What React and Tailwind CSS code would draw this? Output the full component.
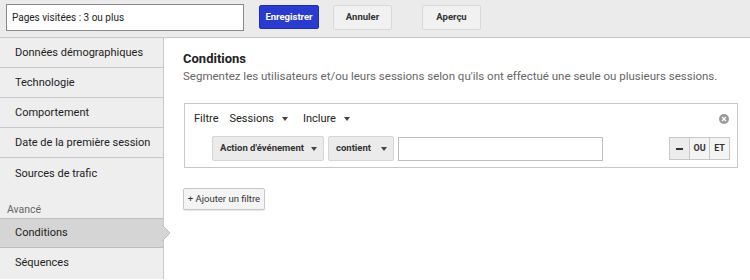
import { useState } from "react";

const sideItems = [
  "Données démographiques",
  "Technologie",
  "Comportement",
  "Date de la première session",
  "Sources de trafic",
];

function Caret() {
  return (
    <svg width="6" height="4" viewBox="0 0 6 4" className="inline-block">
      <path d="M0 0 L6 0 L3 4 Z" fill="#444" />
    </svg>
  );
}

function TopButton({ label, primary, className }) {
  return (
    <button
      className={
        primary
          ? "h-[24px] w-[60px] rounded-[2px] bg-[#2a3bd0] border border-[#1f2fb5] text-white text-[9.5px] font-bold " + (className || "")
          : "h-[25px] w-[59px] rounded-[2px] bg-[#f1f1f1] border border-[#d9d9d9] text-[#333] text-[9.5px] font-bold " + (className || "")
      }
    >
      {label}
    </button>
  );
}

export default function App() {
  const [segName] = useState("Pages visitées : 3 ou plus");

  return (
    <div className="w-[750px] h-[280px] overflow-hidden bg-white font-['Roboto',sans-serif] text-[#222]">
      <div className="h-[38px] bg-[#ebebeb] border-b border-[#c6c6c6] flex items-start pt-[4px] pl-[6px]">
        <div className="w-[238px] h-[27px] bg-white border border-[#8a8a8a] flex items-center pl-[5px] text-[10px] text-[#222]">
          {segName}
        </div>
        <TopButton label="Enregistrer" primary className="ml-[15px] mt-[1px]" />
        <TopButton label="Annuler" className="ml-[14px] mt-[1px]" />
        <TopButton label="Aperçu" className="ml-[30px] mt-[1px]" />
      </div>

      <div className="flex h-[241px]">
        <div className="w-[164px] shrink-0 bg-[#eeeeee] border-r border-[#c8c8c8] flex flex-col">
          {sideItems.map((item, i) => (
            <div
              key={item}
              className={
                "h-[30px] flex items-center pl-[15px] pt-[2px] text-[11px] text-[#222] " +
                (i < sideItems.length - 1 ? "border-b border-[#c8c8c8]" : "")
              }
            >
              {item}
            </div>
          ))}
          <div className="h-[30px] flex items-end pl-[7px] pb-[0px] text-[10.5px] text-[#666]">Avancé</div>
          <div className="relative h-[30px] flex items-center pl-[15px] pt-[1px] text-[11px] text-[#222] bg-[#d5d5d5] border-t border-b border-[#bdbdbd]">
            Conditions
            <svg width="9" height="16" viewBox="0 0 9 16" className="absolute right-[-8px] top-[6px]">
              <path d="M0 0 L8 8 L0 16 Z" fill="#d5d5d5" />
              <path d="M0 0 L8 8 L0 16" fill="none" stroke="#c0c0c0" strokeWidth="1" />
            </svg>
          </div>
          <div className="h-[30px] flex items-center pl-[15px] pt-[1px] text-[11px] text-[#222]">Séquences</div>
        </div>

        <div className="flex-1 pl-[19px] pr-[12px] pt-[12px]">
          <div className="text-[13px] font-bold text-[#222] leading-[17px]">Conditions</div>
          <div className="text-[11.5px] text-[#666] leading-[15px] mt-[2px]">
            Segmentez les utilisateurs et/ou leurs sessions selon qu'ils ont effectué une seule ou plusieurs sessions.
          </div>

          <div className="mt-[19px] ml-[1px] w-[554px] h-[65px] border border-[#c8c8c8] px-[9px] pt-[6px]">
            <div className="flex items-center text-[11px] text-[#222] h-[18px]">
              <span>Filtre</span>
              <span className="ml-[11px] flex items-center gap-[8px]">Sessions<Caret /></span>
              <span className="ml-[15px] flex items-center gap-[8px]">Inclure<Caret /></span>
              <span className="ml-auto mr-[-1px]">
                <svg width="10" height="10" viewBox="0 0 10 10">
                  <circle cx="5" cy="5" r="5" fill="#9a9a9a" />
                  <path d="M3 3 L7 7 M7 3 L3 7" stroke="#fff" strokeWidth="1.3" />
                </svg>
              </span>
            </div>
            <div className="flex items-center mt-[8px] ml-[18px]">
              <div className="h-[25px] w-[112px] bg-[#ebebeb] border border-[#d6d6d6] rounded-[2px] flex items-center pl-[7px] text-[9.5px] font-bold text-[#333]">
                Action d'événement
                <span className="ml-auto mr-[6px] flex"><Caret /></span>
              </div>
              <div className="ml-[4px] h-[25px] w-[66px] bg-[#ebebeb] border border-[#d6d6d6] rounded-[2px] flex items-center pl-[7px] text-[9.5px] font-bold text-[#333]">
                contient
                <span className="ml-auto mr-[6px] flex"><Caret /></span>
              </div>
              <div className="ml-[4px] h-[24px] w-[205px] bg-white border border-[#bdbdbd]"></div>
              <div className="ml-auto mr-[-2px] flex h-[23px] border border-[#c8c8c8] text-[9px] font-bold text-[#333]">
                <div className="w-[20px] bg-[#ececec] flex items-center justify-center border-r border-[#c8c8c8]">
                  <span className="block w-[7px] h-[2px] bg-[#333]"></span>
                </div>
                <div className="w-[20px] bg-[#f4f4f4] flex items-center justify-center border-r border-[#c8c8c8]">OU</div>
                <div className="w-[19px] bg-[#f4f4f4] flex items-center justify-center">ET</div>
              </div>
            </div>
          </div>

          <button className="mt-[20px] h-[22px] w-[82px] rounded-[2px] bg-[#f4f4f4] border border-[#c8c8c8] shadow-[0_1px_1px_rgba(0,0,0,0.1)] text-[9.5px] text-[#333]">
            + Ajouter un filtre
          </button>
        </div>
      </div>
    </div>
  );
}
